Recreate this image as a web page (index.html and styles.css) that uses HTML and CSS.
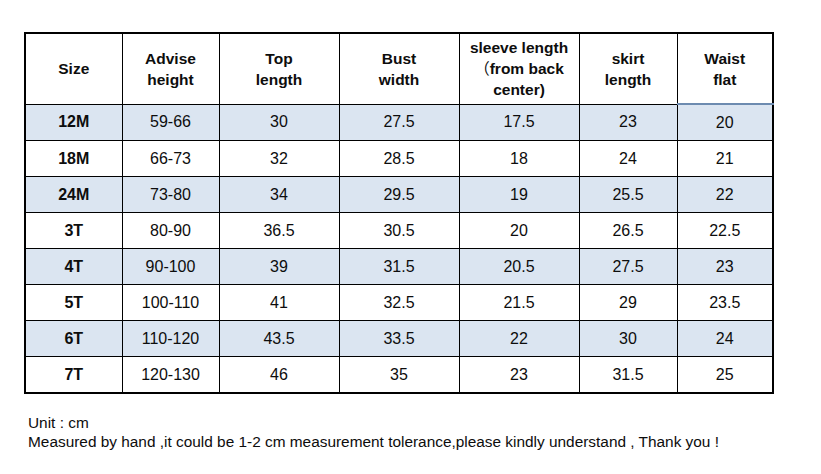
FILE: index.html
```html
<!DOCTYPE html>
<html>
<head>
<meta charset="utf-8">
<link rel="stylesheet" href="styles.css">
</head>
<body>
<div class="page">
  <table class="size-table">
    <colgroup>
      <col class="c-size">
      <col class="c-height">
      <col class="c-top">
      <col class="c-bust">
      <col class="c-sleeve">
      <col class="c-skirt">
      <col class="c-waist">
    </colgroup>
    <thead>
      <tr>
        <th>Size</th>
        <th>Advise<br>height</th>
        <th>Top<br>length</th>
        <th>Bust<br>width</th>
        <th>sleeve length<br><span class="cjk">（</span>from back<br>center)</th>
        <th>skirt<br>length</th>
        <th class="waist-head">Waist<br>flat</th>
      </tr>
    </thead>
    <tbody>
      <tr class="alt"><td class="sz">12M</td><td>59-66</td><td>30</td><td>27.5</td><td>17.5</td><td>23</td><td>20</td></tr>
      <tr><td class="sz">18M</td><td>66-73</td><td>32</td><td>28.5</td><td>18</td><td>24</td><td>21</td></tr>
      <tr class="alt"><td class="sz">24M</td><td>73-80</td><td>34</td><td>29.5</td><td>19</td><td>25.5</td><td>22</td></tr>
      <tr><td class="sz">3T</td><td>80-90</td><td>36.5</td><td>30.5</td><td>20</td><td>26.5</td><td>22.5</td></tr>
      <tr class="alt"><td class="sz">4T</td><td>90-100</td><td>39</td><td>31.5</td><td>20.5</td><td>27.5</td><td>23</td></tr>
      <tr><td class="sz">5T</td><td>100-110</td><td>41</td><td>32.5</td><td>21.5</td><td>29</td><td>23.5</td></tr>
      <tr class="alt"><td class="sz">6T</td><td>110-120</td><td>43.5</td><td>33.5</td><td>22</td><td>30</td><td>24</td></tr>
      <tr><td class="sz">7T</td><td>120-130</td><td>46</td><td>35</td><td>23</td><td>31.5</td><td>25</td></tr>
    </tbody>
  </table>
  <div class="notes">
    <p>Unit : cm</p>
    <p>Measured by hand ,it could be 1-2 cm measurement tolerance,please kindly understand , Thank you !</p>
  </div>
</div>
</body>
</html>
```

FILE: styles.css
```css
html, body {
  margin: 0;
  padding: 0;
  background: #fff;
}

.page {
  padding: 32px 0 0 24px;
  font-family: "Liberation Sans", Arial, "Noto Sans CJK SC", sans-serif;
  color: #0d0d0d;
}

.size-table {
  border-collapse: collapse;
  table-layout: fixed;
  width: 750px;
  border: 2px solid #000;
}

.c-size { width: 97px; }
.c-height { width: 97px; }
.c-top { width: 120px; }
.c-bust { width: 120px; }
.c-sleeve { width: 120px; }
.c-skirt { width: 98px; }
.c-waist { width: 96px; }

.size-table th,
.size-table td {
  border: 1px solid #000;
  padding: 0;
  text-align: center;
  vertical-align: middle;
}

.size-table th {
  height: 69px;
  font-size: 15.5px;
  font-weight: bold;
  line-height: 21px;
}

.size-table th .cjk {
  font-family: "Noto Sans CJK SC", sans-serif;
  font-weight: normal;
  line-height: 1;
}

.size-table th.waist-head {
  border-bottom: 2px solid #6d8bb0;
  border-right-color: #8a9fba;
}

.size-table td {
  height: 35px;
  font-size: 16px;
}

.size-table td.sz {
  font-weight: bold;
}

.size-table tr.alt td {
  background: #dbe5f1;
}

.notes {
  margin-top: 19px;
  padding-left: 4px;
  font-size: 15.4px;
  line-height: 19px;
}

.notes p {
  margin: 0;
}
```
